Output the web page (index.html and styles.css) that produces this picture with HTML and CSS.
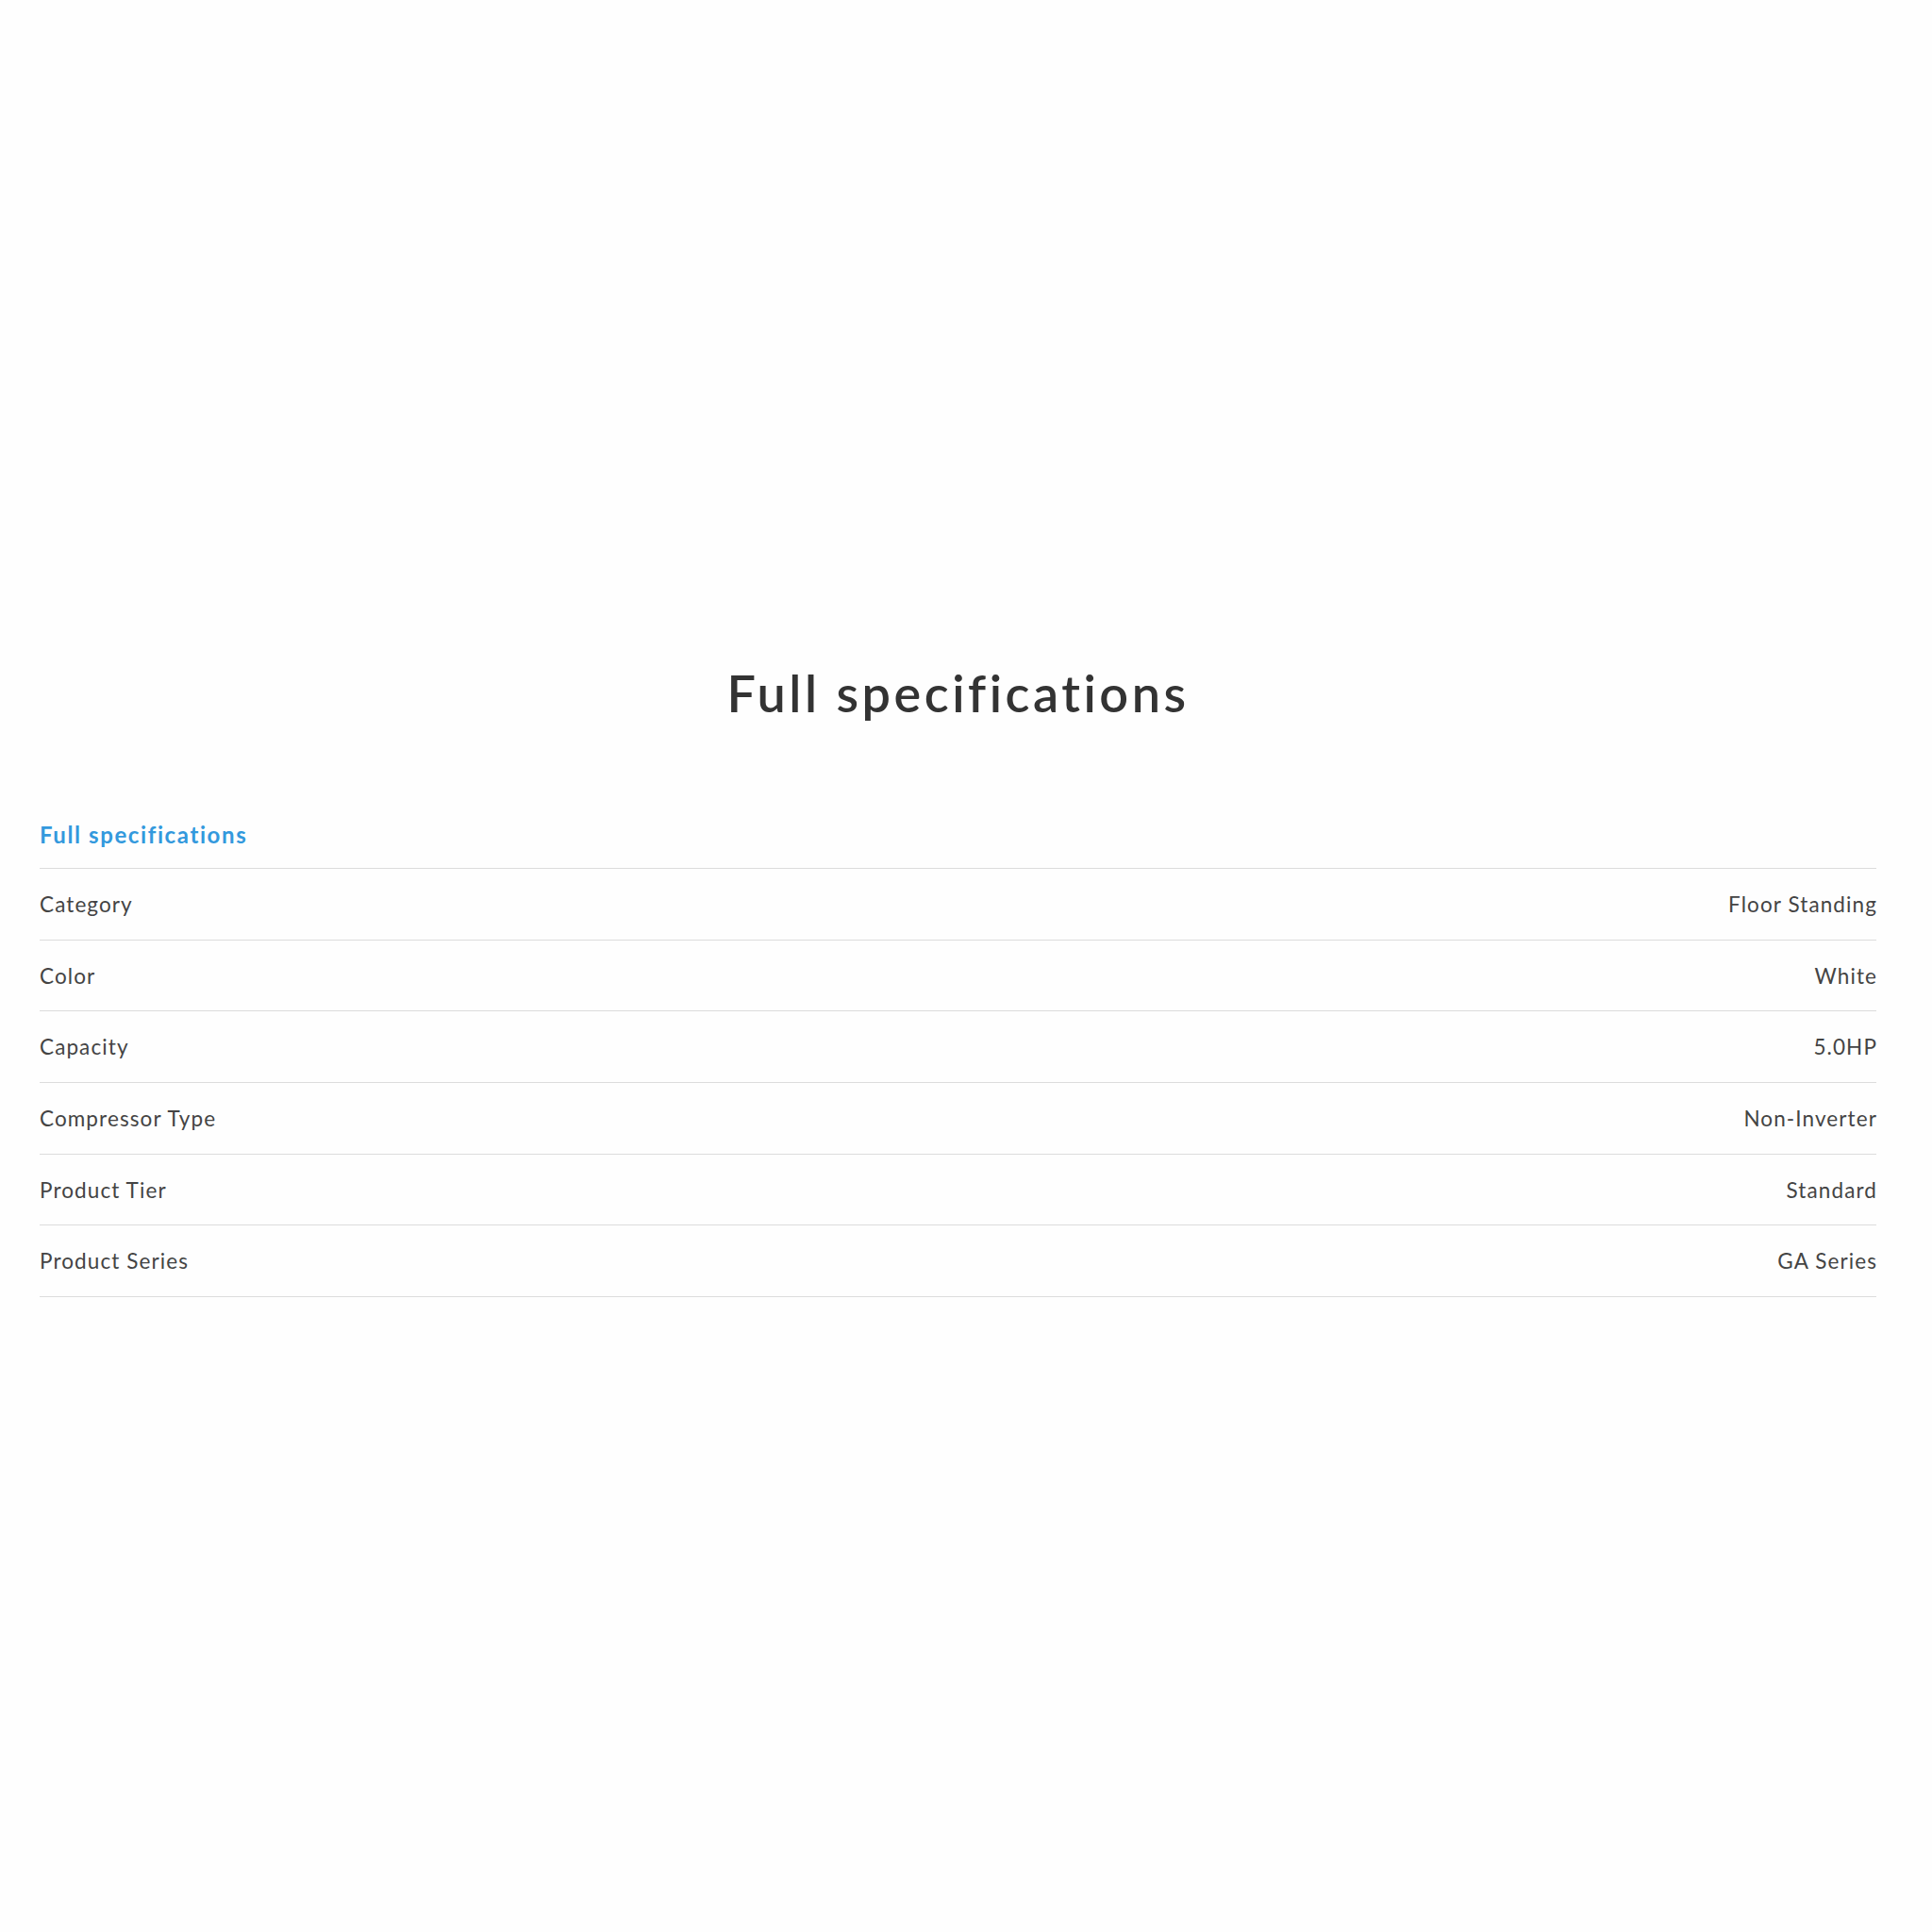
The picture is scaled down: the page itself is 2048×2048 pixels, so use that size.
FILE: index.html
```html
<!DOCTYPE html>
<html lang="en">
<head>
<meta charset="utf-8">
<title>Full specifications</title>
<link rel="stylesheet" href="styles.css">
</head>
<body>
<main class="page">
  <h1 class="title">Full specifications</h1>
  <section class="specs">
    <h2 class="specs-heading">Full specifications</h2>
    <div class="spec-list">
      <div class="spec-row"><span class="spec-label">Category</span><span class="spec-value">Floor Standing</span></div>
      <div class="spec-row"><span class="spec-label">Color</span><span class="spec-value">White</span></div>
      <div class="spec-row"><span class="spec-label">Capacity</span><span class="spec-value">5.0HP</span></div>
      <div class="spec-row"><span class="spec-label">Compressor Type</span><span class="spec-value">Non-Inverter</span></div>
      <div class="spec-row"><span class="spec-label">Product Tier</span><span class="spec-value">Standard</span></div>
      <div class="spec-row"><span class="spec-label">Product Series</span><span class="spec-value">GA Series</span></div>
    </div>
  </section>
</main>
</body>
</html>
```

FILE: styles.css
```css
html, body {
  margin: 0;
  padding: 0;
  background: #fefefe;
}
body {
  font-family: Lato, "Open Sans", Arial, sans-serif;
  color: #333;
  font-variant-ligatures: none;
}
.page {
  padding: 700px 59px 0 42px;
}
.title {
  margin: 0;
  text-align: center;
  font-size: 54px;
  line-height: 70px;
  font-weight: 600;
  letter-spacing: 3.5px;
  color: #333;
}
.specs {
  margin-top: 100px;
}
.specs-heading {
  margin: 0;
  font-size: 24px;
  line-height: 30px;
  font-weight: 700;
  letter-spacing: 1.6px;
  color: #3399dd;
  padding-bottom: 20px;
  border-bottom: 1px solid #dcdcdc;
}
.spec-list {
  display: flex;
  flex-direction: column;
}
.spec-row {
  display: flex;
  justify-content: space-between;
  align-items: center;
  height: 74.7px;
  border-bottom: 1px solid #dcdcdc;
  font-size: 22.5px;
  letter-spacing: 1.1px;
  color: #444;
}
.spec-value {
  margin-right: -1px;
}
```
